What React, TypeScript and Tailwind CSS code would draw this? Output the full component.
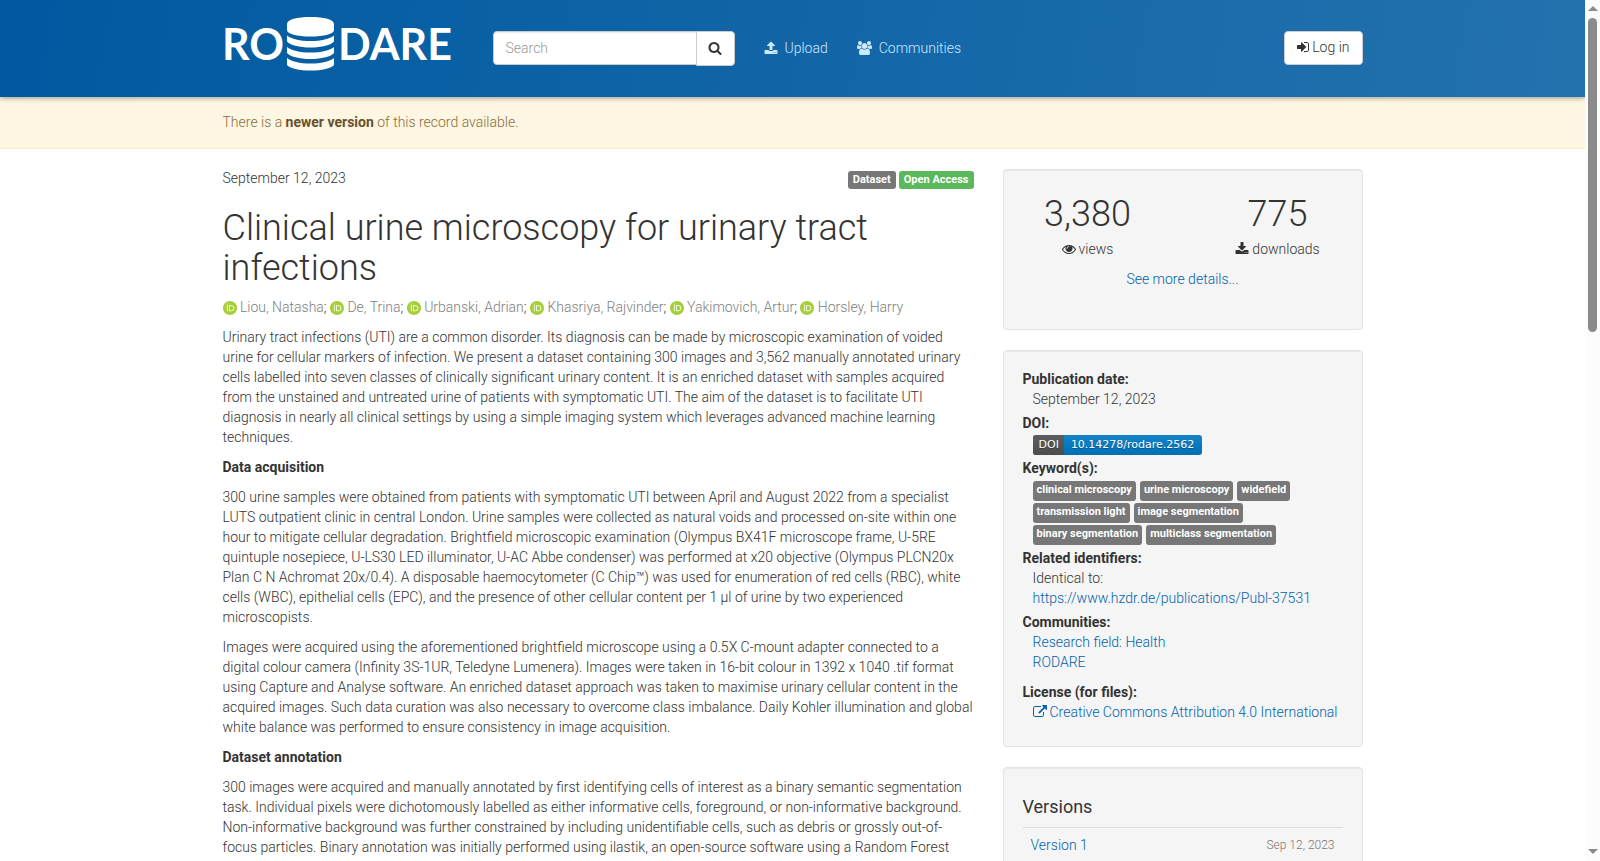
import type { ReactNode } from "react";
import { clsx } from "clsx";
import { SiOrcid } from "react-icons/si";

const ICONS = {
  search: {
    box: "0 0 1792 1792",
    d: "M1216 832q0-185-131.5-316.5t-316.5-131.5-316.5 131.5-131.5 316.5 131.5 316.5 316.5 131.5 316.5-131.5 131.5-316.5zm512 832q0 52-38 90t-90 38q-54 0-90-38l-343-342q-179 124-399 124-143 0-273.5-55.5t-225-150-150-225-55.5-273.5 55.5-273.5 150-225 225-150 273.5-55.5 273.5 55.5 225 150 150 225 55.5 273.5q0 220-124 399l343 343q37 37 37 90z",
  },
  upload: {
    box: "0 0 1792 1792",
    d: "M1344 1472q0-26-19-45t-45-19-45 19-19 45 19 45 45 19 45-19 19-45zm256 0q0-26-19-45t-45-19-45 19-19 45 19 45 45 19 45-19 19-45zm128-224v320q0 40-28 68t-68 28h-1472q-40 0-68-28t-28-68v-320q0-40 28-68t68-28h427q21 56 70.5 92t110.5 36h256q61 0 110.5-36t70.5-92h427q40 0 68 28t28 68zm-325-648q-17 40-59 40h-256v448q0 26-19 45t-45 19h-256q-26 0-45-19t-19-45v-448h-256q-42 0-59-40-17-39 14-69l448-448q18-19 45-19t45 19l448 448q31 30 14 69z",
  },
  download: {
    box: "0 0 1792 1792",
    d: "M1344 1344q0-26-19-45t-45-19-45 19-19 45 19 45 45 19 45-19 19-45zm256 0q0-26-19-45t-45-19-45 19-19 45 19 45 45 19 45-19 19-45zm128-224v320q0 40-28 68t-68 28h-1472q-40 0-68-28t-28-68v-320q0-40 28-68t68-28h465l135 136q58 56 136 56t136-56l136-136h464q40 0 68 28t28 68zm-325-569q17 41-14 70l-448 448q-18 19-45 19t-45-19l-448-448q-31-29-14-70 17-39 59-39h256v-448q0-26 19-45t45-19h256q26 0 45 19t19 45v448h256q42 0 59 39z",
  },
  users: {
    box: "0 0 1920 1792",
    d: "M593 896q-162 5-265 128h-134q-82 0-138-40.5t-56-118.5q0-353 124-353 6 0 43.5 21t97.5 42.5 119 21.5q67 0 133-23-5 37-5 66 0 139 81 256zm1071 637q0 120-73 189.5t-194 69.5h-874q-121 0-194-69.5t-73-189.5q0-53 3.5-103.5t14-109 26.5-108.5 43-97.5 62-81 85.5-53.5 111.5-20q10 0 43 21.5t73 48 107 48 135 21.5 135-21.5 107-48 73-48 43-21.5q61 0 111.5 20t85.5 53.5 62 81 43 97.5 26.5 108.5 14 109 3.5 103.5zm-1024-1277q0 106-75 181t-181 75-181-75-75-181 75-181 181-75 181 75 75 181zm704 384q0 159-112.5 271.5t-271.5 112.5-271.5-112.5-112.5-271.5 112.5-271.5 271.5-112.5 271.5 112.5 112.5 271.5zm576 225q0 78-56 118.5t-138 40.5h-134q-103-123-265-128 81-117 81-256 0-29-5-66 66 23 133 23 59 0 119-21.5t97.5-42.5 43.5-21q124 0 124 353zm-128-609q0 106-75 181t-181 75-181-75-75-181 75-181 181-75 181 75 75 181z",
  },
  signIn: {
    box: "128 0 1536 1792",
    d: "M1312 896q0 26-19 45l-544 544q-19 19-45 19t-45-19-19-45v-288h-448q-26 0-45-19t-19-45v-384q0-26 19-45t45-19h448v-288q0-26 19-45t45-19 45 19l544 544q19 19 19 45zm352-352v704q0 119-84.5 203.5t-203.5 84.5h-320q-13 0-22.5-9.5t-9.5-22.5q0-4-1-20t-.5-26.5 3-23.5 10-19.5 20.5-6.5h320q66 0 113-47t47-113v-704q0-66-47-113t-113-47h-312l-11.5-1-11.5-3-8-5.5-7-9-2-13.5q0-4-1-20t-.5-26.5 3-23.5 10-19.5 20.5-6.5h320q119 0 203.5 84.5t84.5 203.5z",
  },
  eye: {
    box: "0 0 1792 1792",
    d: "M1664 960q-152-236-381-353 61 104 61 225 0 185-131.5 316.5t-316.5 131.5-316.5-131.5-131.5-316.5q0-121 61-225-229 117-381 353 133 205 333.5 326.5t434.5 121.5 434.5-121.5 333.5-326.5zm-720-384q0-20-14-34t-34-14q-125 0-214.5 89.5t-89.5 214.5q0 20 14 34t34 14 34-14 14-34q0-86 61-147t147-61q20 0 34-14t14-34zm848 384q0 34-20 69-140 230-376.5 368.5t-499.5 138.5-499.5-139-376.5-368q-20-35-20-69t20-69q140-229 376.5-368t499.5-139 499.5 139 376.5 368q20 35 20 69z",
  },
  external: {
    box: "0 0 1792 1792",
    d: "M1408 928v320q0 119-84.5 203.5t-203.5 84.5h-832q-119 0-203.5-84.5t-84.5-203.5v-832q0-119 84.5-203.5t203.5-84.5h704q14 0 23 9t9 23v64q0 14-9 23t-23 9h-704q-66 0-113 47t-47 113v832q0 66 47 113t113 47h832q66 0 113-47t47-113v-320q0-14 9-23t23-9h64q14 0 23 9t9 23zm384-864v512q0 26-19 45t-45 19-45-19l-176-176-652 652q-10 10-23 10t-23-10l-114-114q-10-10-10-23t10-23l652-652-176-176q-19-19-19-45t19-45 45-19h512q26 0 45 19t19 45z",
  },
};

function Icon({ name, className }: { name: keyof typeof ICONS; className?: string }) {
  return (
    <svg viewBox={ICONS[name].box} fill="currentColor" aria-hidden="true" className={clsx("inline-block h-[14px] w-auto shrink-0", className)}>
      <path d={ICONS[name].d} />
    </svg>
  );
}

const AUTHORS = ["Liou, Natasha", "De, Trina", "Urbanski, Adrian", "Khasriya, Rajvinder", "Yakimovich, Artur", "Horsley, Harry"];

const KEYWORDS = [
  "clinical microscopy",
  "urine microscopy",
  "widefield",
  "transmission light",
  "image segmentation",
  "binary segmentation",
  "multiclass segmentation",
];

function Logo() {
  return (
    <svg viewBox="0 0 230 60" fill="#fff" role="img" aria-label="RODARE" className="h-[60px] w-[230px] overflow-visible font-['Lato',sans-serif] text-[43px] font-bold">
      <text x="-1" y="46">RO</text>
      <path d="M64 10C64 5.500 74 3 87.500 3S111 5.500 111 10V16C111 20 101 22.500 87.500 22.500S64 20 64 16Z" />
      <path d="M64 21.500C68 25 77 27 87.500 27S107 25 111 21.500V27.500C108 31 99 33.500 87.500 33.500S67 31 64 27.500Z" />
      <path d="M64 33C68 36.500 77 38.500 87.500 38.500S107 36.500 111 33V39C108 42.500 99 45 87.500 45S67 42.500 64 39Z" />
      <path d="M64 44C68 47.500 77 49.500 87.500 49.500S107 47.500 111 44V51C108 54.500 99 56.500 87.500 56.500S67 54.500 64 51Z" />
      <text x="115" y="46">DARE</text>
    </svg>
  );
}

function Header() {
  return (
    <header className="relative z-10 bg-[linear-gradient(100deg,#0059a0,#2372ae)] shadow-[0_1px_5px_rgba(0,0,0,0.4)]">
      <div className="mx-auto flex h-[97px] max-w-[1170px] items-center px-[15px] pb-px">
        <a href="#" className="mt-[-9px] mr-10">
          <Logo />
        </a>
        <form className="flex items-start">
          <input
            type="text"
            aria-label="Search"
            placeholder="Search"
            className="h-[34px] w-[204px] rounded-l border border-[#ccc] bg-white px-3 text-[14px] font-light text-[#555] shadow-[inset_0_1px_1px_rgba(0,0,0,0.075)] placeholder:text-[#999]"
          />
          <button type="button" aria-label="Search" className="-ml-px flex h-[35px] w-[39px] items-center justify-center rounded-r border border-[#ccc] bg-white text-[#333]">
            <Icon name="search" />
          </button>
        </form>
        <nav className="ml-[29px] flex gap-[29px] text-[#cce8ff]">
          <a href="#" className="flex items-center gap-[7px]">
            <Icon name="upload" />
            Upload
          </a>
          <a href="#" className="flex items-center gap-[7px]">
            <Icon name="users" />
            Communities
          </a>
        </nav>
        <button type="button" className="ml-auto flex h-[34px] items-center gap-[3px] rounded border border-[#ccc] bg-white px-3 pb-[2px] text-[#333]">
          <Icon name="signIn" />
          Log in
        </button>
      </div>
    </header>
  );
}

function Label({ children, className }: { children: ReactNode; className?: string }) {
  return <span className={clsx("inline-block rounded-[3px] bg-[#777] text-[11px] leading-[18px] font-bold text-white", className)}>{children}</span>;
}

function Well({ children }: { children: ReactNode }) {
  return <section className="mb-5 rounded border border-[#e3e3e3] bg-[#f5f5f5] p-[19px] shadow-[inset_0_1px_1px_rgba(0,0,0,0.05)]">{children}</section>;
}

function Record() {
  return (
    <main className="min-w-0 flex-1">
      <div className="flex items-start justify-between">
        <span>September 12, 2023</span>
        <div className="mt-[3px] flex gap-[3px]">
          <Label className="px-[5px]">Dataset</Label>
          <span className="rounded-[3px] bg-[#5cb85c] px-[5px] text-[11px] leading-[18px] font-bold text-white">Open Access</span>
        </div>
      </div>
      <h1 className="mt-[19px] mb-[9px] text-[36px] leading-[40px]">Clinical urine microscopy for urinary tract infections</h1>
      <p className="mb-[10px]">
        {AUTHORS.map((name, i) => (
          <span key={name}>
            <SiOrcid aria-hidden="true" className="inline-block size-[14px] align-[-3px] text-[#a6ce39]" />{" "}
            <a href="#" className="text-[#808080]">{name}</a>
            {i < AUTHORS.length - 1 && "; "}
          </span>
        ))}
      </p>
      <div className="space-y-[10px] [&_strong]:font-bold">
        <p>
          Urinary tract infections (UTI) are a common disorder. Its diagnosis can be made by microscopic examination of voided urine for cellular markers of infection. We present a dataset containing 300 images and 3,562 manually annotated urinary cells labelled into seven classes of clinically significant urinary content. It is an enriched dataset with samples acquired from the unstained and untreated urine of patients with symptomatic UTI. The aim of the dataset is to facilitate UTI diagnosis in nearly all clinical settings by using a simple imaging system which leverages advanced machine learning techniques.
        </p>
        <p>
          <strong>Data acquisition</strong>
        </p>
        <p>
          300 urine samples were obtained from patients with symptomatic UTI between April and August 2022 from a specialist LUTS outpatient clinic in central London. Urine samples were collected as natural voids and processed on-site within one hour to mitigate cellular degradation. Brightfield microscopic examination (Olympus BX41F microscope frame, U-5RE quintuple nosepiece, U-LS30 LED illuminator, U-AC Abbe condenser) was performed at x20 objective (Olympus PLCN20x Plan C N Achromat 20x/0.4). A disposable haemocytometer (C Chip™) was used for enumeration of red cells (RBC), white cells (WBC), epithelial cells (EPC), and the presence of other cellular content per 1 µl of urine by two experienced microscopists.
        </p>
        <p>
          Images were acquired using the aforementioned brightfield microscope using a 0.5X C-mount adapter connected to a digital colour camera (Infinity 3S-1UR, Teledyne Lumenera). Images were taken in 16-bit colour in 1392 x 1040 .tif format using Capture and Analyse software. An enriched dataset approach was taken to maximise urinary cellular content in the acquired images. Such data curation was also necessary to overcome class imbalance. Daily Kohler illumination and global white balance was performed to ensure consistency in image acquisition.
        </p>
        <p>
          <strong>Dataset annotation</strong>
        </p>
        <p>
          300 images were acquired and manually annotated by first identifying cells of interest as a binary semantic segmentation task. Individual pixels were dichotomously labelled as either informative cells, foreground, or non-informative background. Non-informative background was further constrained by including unidentifiable cells, such as debris or grossly out-of-focus particles. Binary annotation was initially performed using ilastik, an open-source software using a Random Forest
        </p>
      </div>
    </main>
  );
}

function Sidebar() {
  return (
    <aside className="w-[360px] shrink-0 pt-px">
      <Well>
        <div className="-mx-[15px] mt-[5px] grid grid-cols-2 gap-[30px] text-center">
          <div>
            <div className="mb-[5px] text-[36px] leading-[40px]">3,380</div>
            <div className="flex items-center justify-center gap-[3px]">
              <Icon name="eye" />
              views
            </div>
          </div>
          <div>
            <div className="mb-[5px] text-[36px] leading-[40px]">775</div>
            <div className="flex items-center justify-center gap-[3px]">
              <Icon name="download" />
              downloads
            </div>
          </div>
        </div>
        <p className="mt-[10px] mb-[21px] text-center">
          <a href="#" className="text-[#0063ad]">See more details...</a>
        </p>
      </Well>

      <Well>
        <dl className="-mt-px mb-[5px] [&_a]:text-[#0063ad] [&_dd]:ml-[10px] [&_dt]:font-bold">
          <dt>Publication date:</dt>
          <dd>September 12, 2023</dd>
          <dt className="mt-1">DOI:</dt>
          <dd className="py-[2px]">
            <a
              href="#"
              className="flex h-5 w-fit overflow-hidden rounded-[3px] bg-[linear-gradient(#1284c9,#006fb3)] font-['DejaVu_Sans',sans-serif] text-[11px] font-normal [text-shadow:0_1px_0_rgba(1,1,1,0.3)]"
            >
              <span className="bg-[linear-gradient(#5d5d5d,#4c4c4c)] pr-[5px] pl-[6px] text-white">DOI</span>
              <span className="pr-2 pl-[7px] text-white">10.14278/rodare.2562</span>
            </a>
          </dd>
          <dt className="mt-px">Keyword(s):</dt>
          <dd className="flex flex-wrap gap-x-1 gap-y-[2px] pt-[3px] pb-[2px] pr-6">
            {KEYWORDS.map((word) => (
              <Label key={word} className="px-1 pb-[2px]">{word}</Label>
            ))}
          </dd>
          <dt className="mt-px">Related identifiers:</dt>
          <dd>Identical to:</dd>
          <dd>
            <a href="#">https://www.hzdr.de/publications/Publ-37531</a>
          </dd>
          <dt className="mt-1">Communities:</dt>
          <dd>
            <a href="#">Research field: Health</a>
          </dd>
          <dd>
            <a href="#">RODARE</a>
          </dd>
          <dt className="mt-[10px]">License (for files):</dt>
          <dd>
            <a href="#" className="flex items-center gap-[3px]">
              <Icon name="external" />
              Creative Commons Attribution 4.0 International
            </a>
          </dd>
        </dl>
      </Well>

      <Well>
        <h4 className="mt-[10px] mb-[10px] text-[18px] font-normal">Versions</h4>
        <div className="border-t border-[#ddd] px-2 pt-[7px]">
          <div className="flex items-center justify-between">
            <a href="#" className="text-[#0063ad]">Version 1</a>
            <span className="text-[12px] text-[#777]">Sep 12, 2023</span>
          </div>
          <div className="mt-[2px] text-[12px] text-[#777]">10.14278/rodare.2562</div>
        </div>
      </Well>
    </aside>
  );
}

function ScrollRail() {
  return (
    <div aria-hidden="true" className="flex w-[15px] shrink-0 flex-col items-center bg-[#fcfcfc] pt-[6px] pb-[7px]">
      <svg width="10" height="5" fill="#8b8b8b">
        <path d="M0 5L5 0L10 5Z" />
      </svg>
      <div className="mt-[7px] h-[314px] w-[9px] rounded-full bg-[#8b8b8b]" />
      <svg width="10" height="5" fill="#8b8b8b" className="mt-auto">
        <path d="M0 0L5 5L10 0Z" />
      </svg>
    </div>
  );
}

export default function App() {
  return (
    <div className="flex h-screen overflow-hidden bg-white font-['Roboto',sans-serif] text-[14px] leading-[20px] font-light text-[#333]">
      <div className="min-w-0 flex-1 overflow-hidden">
        <Header />
        <div className="border-b border-[#faebcc] bg-[#fdf6e2] text-[#8a6d3b]">
          <div className="mx-auto max-w-[1170px] px-[15px] pt-[15px] pb-4">
            There is a{" "}
            <a href="#" className="font-bold text-[#66512c]">newer version</a>{" "}
            of this record available.
          </div>
        </div>
        <div className="mx-auto flex max-w-[1170px] gap-[29px] px-[15px] pt-[19px]">
          <Record />
          <Sidebar />
        </div>
      </div>
      <ScrollRail />
    </div>
  );
}
